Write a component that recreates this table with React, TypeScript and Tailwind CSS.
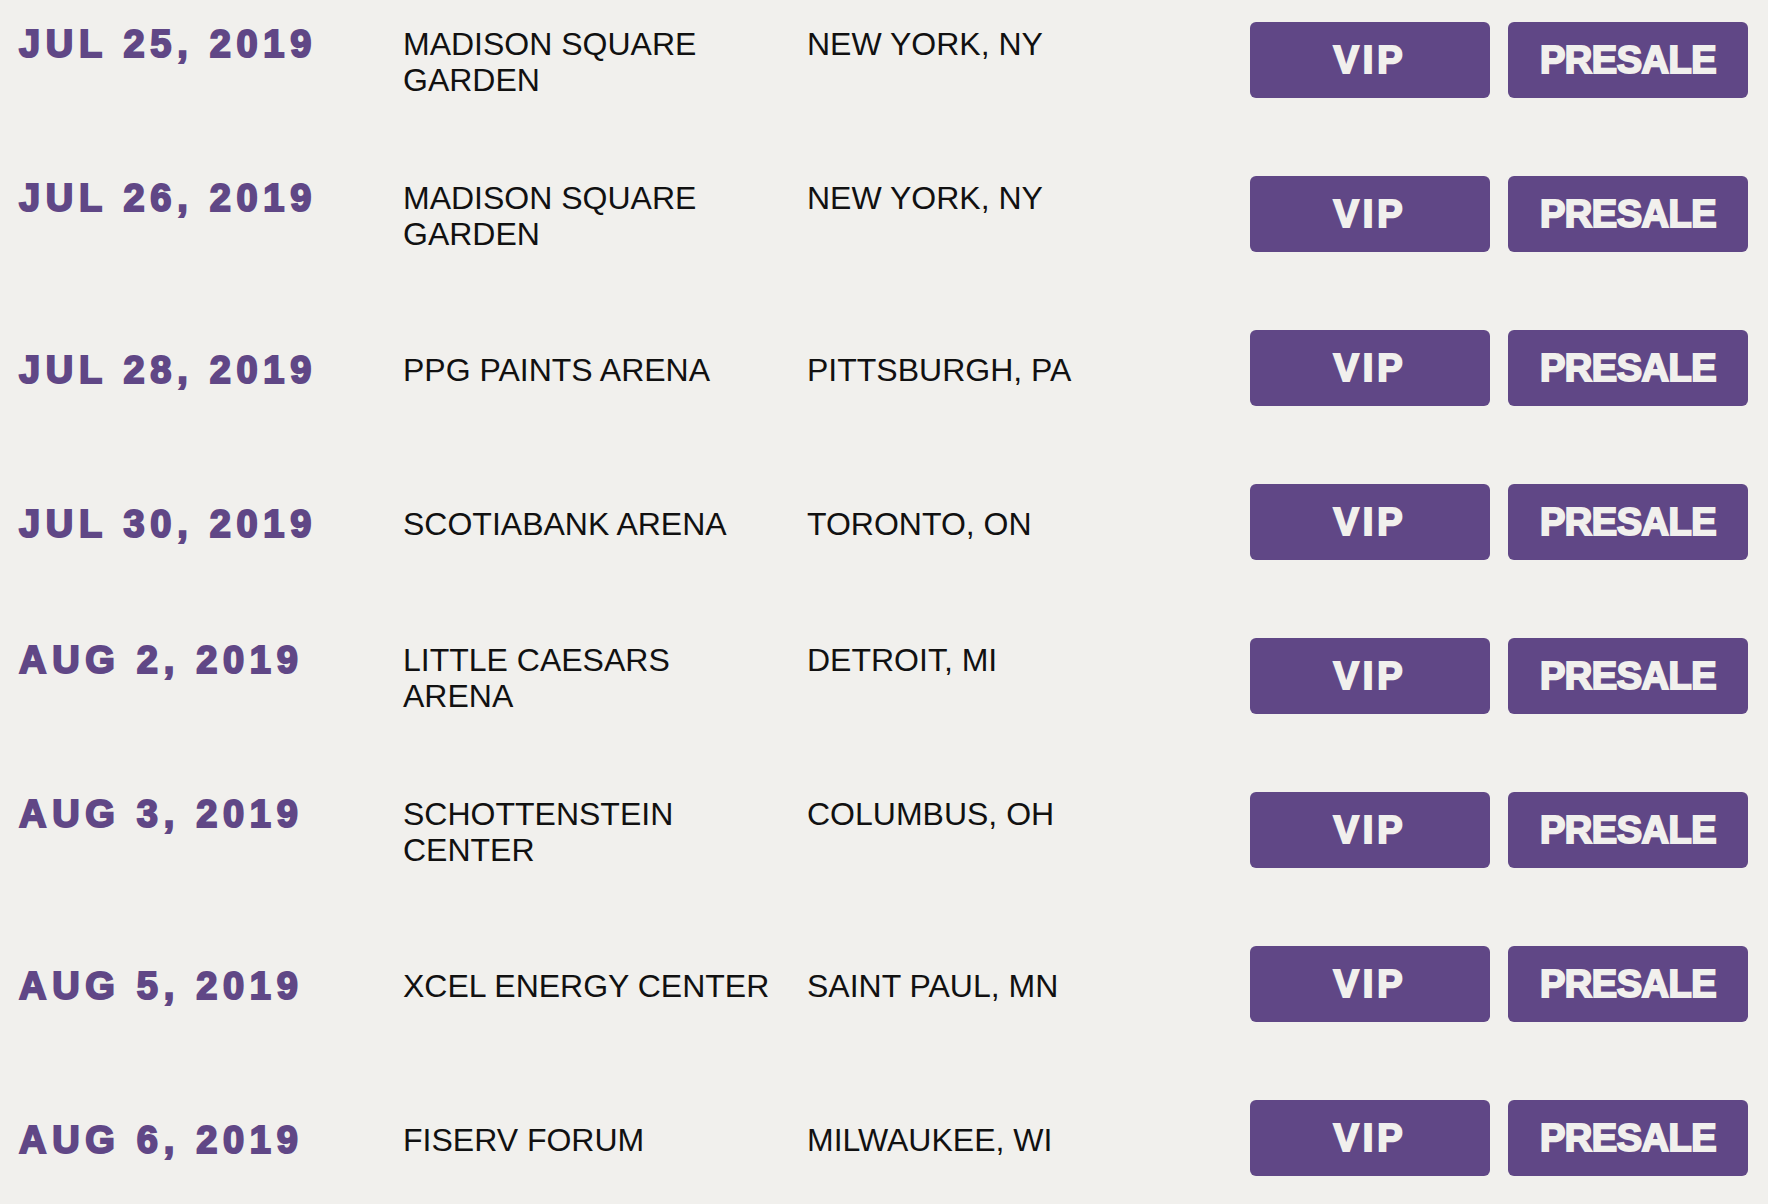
import React from 'react';

type Show = {
  date: string;
  venue: string;
  city: string;
};

const shows: Show[] = [
  { date: 'JUL 25, 2019', venue: 'MADISON SQUARE\nGARDEN', city: 'NEW YORK, NY' },
  { date: 'JUL 26, 2019', venue: 'MADISON SQUARE\nGARDEN', city: 'NEW YORK, NY' },
  { date: 'JUL 28, 2019', venue: 'PPG PAINTS ARENA', city: 'PITTSBURGH, PA' },
  { date: 'JUL 30, 2019', venue: 'SCOTIABANK ARENA', city: 'TORONTO, ON' },
  { date: 'AUG 2, 2019', venue: 'LITTLE CAESARS\nARENA', city: 'DETROIT, MI' },
  { date: 'AUG 3, 2019', venue: 'SCHOTTENSTEIN\nCENTER', city: 'COLUMBUS, OH' },
  { date: 'AUG 5, 2019', venue: 'XCEL ENERGY CENTER', city: 'SAINT PAUL, MN' },
  { date: 'AUG 6, 2019', venue: 'FISERV FORUM', city: 'MILWAUKEE, WI' },
];

const heavy = "font-['Liberation_Sans',Arial,sans-serif] font-bold [-webkit-text-stroke:2px_currentColor]";
const light = "font-['Liberation_Sans',Arial,sans-serif] text-[32px] leading-[36px] text-[#111111]";

const TicketButton = ({ label, tracking }: { label: string; tracking: string }) => (
  <button
    className={`flex h-[76px] w-[240px] items-center justify-center rounded-[6px] bg-[#604786] text-[38px] leading-none text-[#f1f0ed] ${heavy} ${tracking}`}
  >
    {label}
  </button>
);

const ShowRow = ({ show }: { show: Show }) => (
  <div className="flex h-[76px] items-center">
    <div className="grid flex-1 grid-cols-[384px_404px_1fr] items-start pt-1">
      <div className={`text-[38px] leading-[36px] tracking-[0.15em] text-[#604786] ${heavy}`}>{show.date}</div>
      <div className={`whitespace-pre-line ${light}`}>{show.venue}</div>
      <div className={light}>{show.city}</div>
    </div>
    <div className="flex gap-[18px]">
      <TicketButton label="VIP" tracking="tracking-[4px]" />
      <TicketButton label="PRESALE" tracking="tracking-[-0.5px]" />
    </div>
  </div>
);

export default function App() {
  return (
    <div className="min-h-screen bg-[#f1f0ed] pb-7 pl-[19px] pr-5 pt-[22px]">
      <div className="flex flex-col gap-[78px]">
        {shows.map((show) => (
          <ShowRow key={show.date} show={show} />
        ))}
      </div>
    </div>
  );
}
